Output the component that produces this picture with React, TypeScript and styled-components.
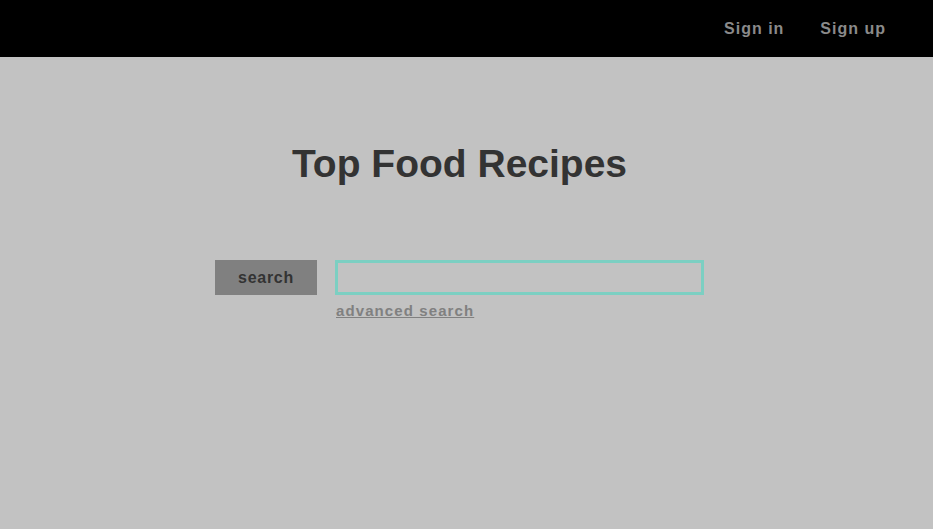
import React from "react";
import styled, { createGlobalStyle } from "styled-components";

const Global = createGlobalStyle`
  html, body { margin: 0; padding: 0; height: 100%; }
  body { background: #c2c2c2; font-family: "Liberation Sans", Arial, sans-serif; }
  #root { min-height: 100%; }
`;

const Page = styled.div`
  min-height: 529px;
  background: #c2c2c2;
  display: flex;
  flex-direction: column;
`;

const TopBar = styled.header`
  height: 57px;
  background: #000;
  display: flex;
  justify-content: flex-end;
  align-items: center;
  padding-right: 47px;
  gap: 36px;
`;

const NavLink = styled.a`
  color: #8a8a8a;
  font-weight: bold;
  font-size: 16px;
  letter-spacing: 1px;
  text-decoration: none;
`;

const Main = styled.main`
  display: flex;
  flex-direction: column;
  align-items: center;
  padding-right: 14px;
`;

const Title = styled.h1`
  margin: 84px 0 0;
  font-size: 39px;
  line-height: 45px;
  font-weight: bold;
  color: #333;
`;

const SearchRow = styled.div`
  margin-top: 74px;
  display: flex;
  gap: 18px;
  align-items: flex-start;
`;

const SearchButton = styled.button`
  width: 102px;
  height: 35px;
  background: #808080;
  border: none;
  color: #333;
  font-family: "Liberation Sans", Arial, sans-serif;
  font-weight: bold;
  font-size: 16px;
  letter-spacing: 0.7px;
  padding: 0;
`;

const Column = styled.div`
  display: flex;
  flex-direction: column;
`;

const SearchInput = styled.input`
  width: 369px;
  height: 35px;
  box-sizing: border-box;
  border: 3px solid #7ccfc2;
  background: #c2c2c2;
  outline: none;
`;

const Advanced = styled.a`
  margin-top: 7px;
  margin-left: 1px;
  color: #808080;
  font-weight: bold;
  font-size: 15px;
  letter-spacing: 1.1px;
  text-decoration: underline;
`;

export default function App() {
  return (
    <Page>
      <Global />
      <TopBar>
        <NavLink href="#">Sign in</NavLink>
        <NavLink href="#">Sign up</NavLink>
      </TopBar>
      <Main>
        <Title>Top Food Recipes</Title>
        <SearchRow>
          <SearchButton>search</SearchButton>
          <Column>
            <SearchInput />
            <Advanced href="#">advanced search</Advanced>
          </Column>
        </SearchRow>
      </Main>
    </Page>
  );
}
